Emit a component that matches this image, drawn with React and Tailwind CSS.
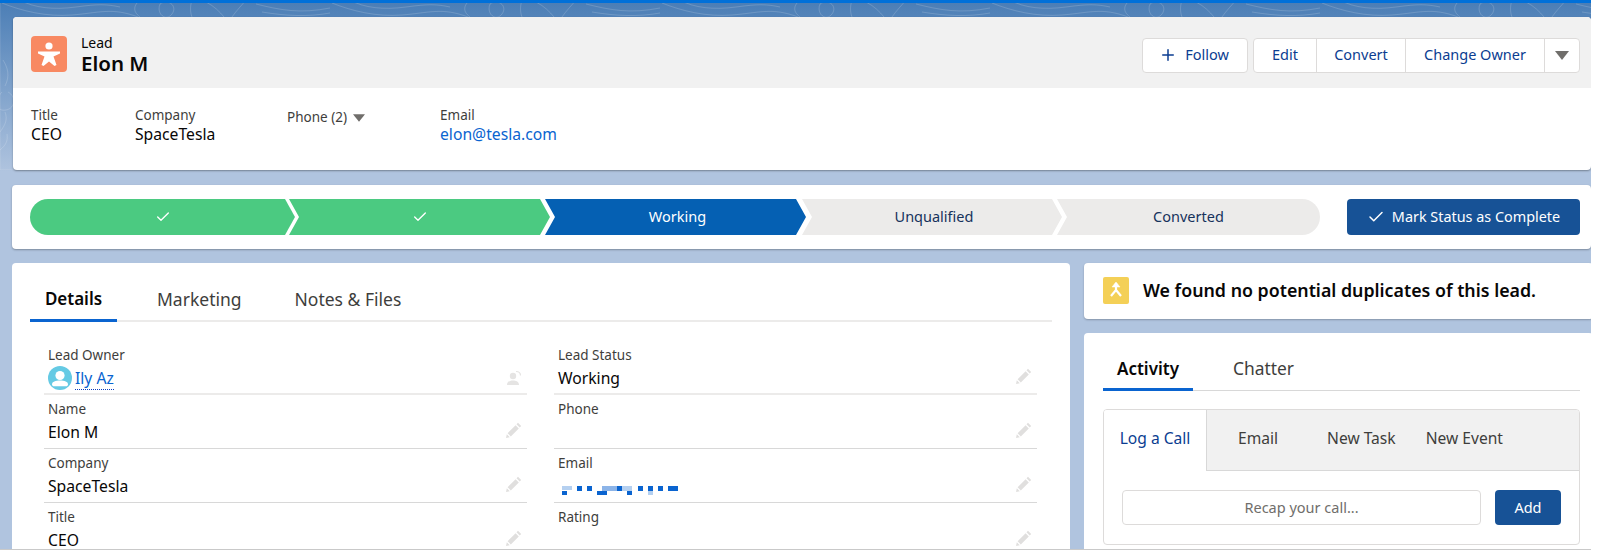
import { Check, Plus } from 'lucide-react';

const FONT = 'font-["Noto_Sans",sans-serif]';

const PATH_STEPS = [
  { label: null, cls: 'w-[265px] bg-[#4bca81] rounded-l-[18px] [clip-path:polygon(0_0,calc(100%-10px)_0,100%_50%,calc(100%-10px)_100%,0_100%)]' },
  { label: null, cls: 'w-[261px] -ml-[6px] bg-[#4bca81] [clip-path:polygon(0_0,calc(100%-10px)_0,100%_50%,calc(100%-10px)_100%,0_100%,10px_50%)]' },
  { label: 'Working', cls: 'w-[261px] -ml-[5px] pl-[4px] bg-[#0560b3] text-white [clip-path:polygon(0_0,calc(100%-10px)_0,100%_50%,calc(100%-10px)_100%,0_100%,10px_50%)]' },
  { label: 'Unqualified', cls: 'w-[260px] -ml-[4px] pl-[4px] bg-[#ecebea] text-[#16325c] [clip-path:polygon(0_0,calc(100%-10px)_0,100%_50%,calc(100%-10px)_100%,0_100%,10px_50%)]' },
  { label: 'Converted', cls: 'w-[263px] -ml-[5px] bg-[#ecebea] text-[#16325c] rounded-r-[18px] [clip-path:polygon(0_0,100%_0,100%_100%,0_100%,10px_50%)]' },
];

const LEFT_FIELDS = [
  { label: 'Lead Owner', owner: true },
  { label: 'Name', value: 'Elon M' },
  { label: 'Company', value: 'SpaceTesla' },
  { label: 'Title', value: 'CEO' },
];

const RIGHT_FIELDS = [
  { label: 'Lead Status', value: 'Working' },
  { label: 'Phone' },
  { label: 'Email', blurred: true },
  { label: 'Rating' },
];

// dark and light squares of the pixelated address
const BLUR_RECTS = [
  [0, 0, 10, 4, '#b5d0f0'], [0, 5, 5, 4, '#0a64d0'], [15, 0, 5, 5, '#0a64d0'], [25, 0, 5, 5, '#0a64d0'],
  [35, 5, 10, 4, '#0a64d0'], [40, 0, 15, 5, '#8cb4e8'], [55, 0, 5, 5, '#0a64d0'], [60, 0, 5, 5, '#b5d0f0'],
  [65, 0, 5, 5, '#b5d0f0'], [65, 5, 5, 4, '#0a64d0'], [76, 0, 5, 5, '#0a64d0'], [86, 0, 5, 5, '#0a64d0'],
  [86, 5, 5, 4, '#b5d0f0'], [96, 0, 5, 5, '#0a64d0'], [106, 0, 10, 5, '#0a64d0'],
];

function Topo() {
  return (
    <svg className="absolute left-0 top-0" width="1600" height="170" fill="none" stroke="#ffffff" strokeOpacity="0.16" strokeWidth="1">
      <defs>
        <pattern id="topo" width="330" height="170" patternUnits="userSpaceOnUse">
          <path d="M2 3c20 8 44 14 70 12s40-8 66 2M20 0c14 8 34 10 56 7s30-3 44 0M140 17c-8-6-6-12 0-17M160 4c8-6 18 2 12 10s-16 0-12-10M192 0c-2 6-2 12 0 17M206 2c8 4 14 10 18 15M232 17c4-6 10-12 14-17M256 4c24 6 44 10 74 4M262 12c24 4 46 5 68 1" />
          <path d="M2 92c-8 8-6 20 4 18s10-14 2-18M0 132c5-7 8-12 5-20M3 60c5 8 7 16 2 26M0 150c6-5 8-9 7-16" />
        </pattern>
      </defs>
      <rect width="1600" height="170" fill="url(#topo)" />
    </svg>
  );
}

function LeadIcon() {
  return (
    <div className="w-9 h-9 rounded-[4px] bg-[#f88962] flex items-center justify-center">
      <svg width="24" height="26" viewBox="0 0 24 26" fill="#fff">
        <circle cx="12" cy="5" r="3.6" />
        <path d="M1 10.5 L23 10.5 L23 12.5 L16.5 15.5 L19.5 24 L17.5 25 L12 20.5 L6.5 25 L4.5 24 L7.5 15.5 L1 12.5Z" />
      </svg>
    </div>
  );
}

function Caret({ className }) {
  return (
    <svg className={className} width="14" height="9" viewBox="0 0 14 9" fill="#706e6b">
      <path d="M0 0h14L7 9z" />
    </svg>
  );
}

function Pencil() {
  return (
    <svg width="16" height="16" viewBox="0 0 16 16" fill="#e0dfde">
      <path d="M12 0.8l3.2 3.2-1.5 1.5-3.2-3.2zM9.6 3.2l3.2 3.2-8 8-3.2-3.2zM0.8 12.2l3 3-3.8 0.8z" />
    </svg>
  );
}

function OwnerChange() {
  return (
    <svg width="16" height="16" viewBox="0 0 16 16" fill="#e5e4e3">
      <circle cx="7" cy="6" r="3.2" />
      <path d="M1 15c0-3.5 3-4.6 6-4.6s6 1.100 6 4.600z" />
      <path d="M10 1.500c2.500 0 4.500 1.500 4.500 4" fill="none" stroke="#e5e4e3" strokeWidth="1.200" />
    </svg>
  );
}

function Avatar() {
  return (
    <svg width="24" height="24" viewBox="0 0 24 24" className="shrink-0">
      <circle cx="12" cy="12" r="12" fill="#65cae4" />
      <circle cx="12" cy="9.500" r="4.600" fill="#fff" />
      <path d="M4 18.500c0-3 3.500-4 8-4s8 1 8 4c0 1-1 1.800-2 1.800H6c-1 0-2-.8-2-1.800z" fill="#fff" />
    </svg>
  );
}

function MergeIcon() {
  return (
    <div className="w-[26px] h-[27px] rounded-[2px] bg-[#f4d057] flex items-center justify-center">
      <svg width="14" height="18" viewBox="0 0 14 18" fill="none" stroke="#fff" strokeWidth="2.200">
        <path d="M7 2v7M7 9l-5 6M7 9l5 6" />
        <path d="M3 6l4-5 4 5z" fill="#fff" strokeWidth="0.500" />
      </svg>
    </div>
  );
}

function Field({ field, first }) {
  return (
    <div className={`h-[54px] pt-[5px] px-[4px] relative ${first ? 'border-b-2 border-[#ecebea]' : 'border-b border-[#d8d8d8]'}`}>
      <div className="text-[13.5px] leading-[18px] text-[#3e3e3c]">{field.label}</div>
      <div className="h-[24px] mt-[2px] flex items-center text-[15.7px] leading-[24px] text-[#080707]">
        {field.owner && (
          <span className="flex items-center gap-[3px]">
            <Avatar />
            <span className="text-[#0a64d0] border-b border-dotted border-[#0a3fc0] leading-[22px]">Ily Az</span>
          </span>
        )}
        {field.value}
        {field.blurred && (
          <svg width="116" height="10" className="mt-[10px] ml-[4px]">
            {BLUR_RECTS.map(([x, y, w, h, c], i) => <rect key={i} x={x} y={y} width={w} height={h} fill={c} />)}
          </svg>
        )}
      </div>
      <div className={`absolute right-[5px] ${field.owner ? 'top-[29px]' : 'top-[27px]'}`}>
        {field.owner ? <OwnerChange /> : <Pencil />}
      </div>
    </div>
  );
}

export default function App() {
  return (
    <div className={`w-[1600px] h-[557px] bg-white overflow-hidden ${FONT}`}>
      <div className="w-[1591px] h-[550px] relative overflow-hidden border-b border-[#c9c9c9] bg-[linear-gradient(180deg,#4a7db5_0,#b0c4df_172px)]">
        <Topo />
        <div className="h-[3px] bg-[#0070d9] relative" />

        <div className="relative pl-[12px] pt-[14px] flex flex-col">
          {/* Record header */}
          <section className="ml-px h-[153px] rounded-[4px] bg-white overflow-hidden shadow-[0_1px_2px_rgba(0,0,0,0.35)]">
            <div className="h-[71px] bg-[#f1f1f1] flex items-center justify-between pl-[18px] pr-[11px]">
              <div className="flex items-center gap-[14px] pt-[2px]">
                <LeadIcon />
                <div className="pt-[2px]">
                  <div className="text-[14px] leading-[17px] text-[#080707]">Lead</div>
                  <div className="text-[20.5px] leading-[24px] font-semibold text-[#080707]">Elon M</div>
                </div>
              </div>
              <div className="flex items-center gap-[5px] text-[14.5px] text-[#0b3d91] pt-[5px]">
                <button className="w-[106px] h-[35px] flex items-center justify-center gap-[8px] pr-[2px] bg-white border border-[#dddbda] rounded-[4px]">
                  <Plus size={18} strokeWidth={2} />Follow
                </button>
                <div className="h-[35px] flex bg-white border border-[#dddbda] rounded-[4px]">
                  <button className="w-[62px]">Edit</button>
                  <button className="w-[89px] border-l border-[#dddbda]">Convert</button>
                  <button className="w-[139px] border-l border-[#dddbda]">Change Owner</button>
                  <button className="w-[35px] border-l border-[#dddbda] flex items-center justify-center"><Caret /></button>
                </div>
              </div>
            </div>
            <div className="flex pl-[18px] pt-[18px] text-[15.7px] text-[#080707]">
              <div className="w-[104px]">
                <div className="text-[13.5px] leading-[18px] text-[#3e3e3c]">Title</div>
                <div className="leading-[20px]">CEO</div>
              </div>
              <div className="w-[152px]">
                <div className="text-[13.5px] leading-[18px] text-[#3e3e3c]">Company</div>
                <div className="leading-[20px]">SpaceTesla</div>
              </div>
              <div className="w-[153px] flex items-start gap-[6px] text-[13.5px] leading-[18px] text-[#3e3e3c] pt-[2px]">
                Phone (2)<Caret className="mt-[6px] w-[12px] h-[8px]" />
              </div>
              <div>
                <div className="text-[13.5px] leading-[18px] text-[#3e3e3c]">Email</div>
                <div className="leading-[20px] text-[#0a64d0]">elon@tesla.com</div>
              </div>
            </div>
          </section>

          {/* Status path */}
          <section className="mt-[15px] h-[64px] rounded-[4px] bg-white flex items-center justify-between pl-[18px] pr-[11px] shadow-[0_1px_2px_rgba(0,0,0,0.3)]">
            <div className="flex text-[14.5px]">
              {PATH_STEPS.map((step, i) => (
                <div key={i} className={`h-[36px] flex items-center justify-center ${step.cls}`}>
                  {step.label || <Check size={16} color="#fff" strokeWidth={2} />}
                </div>
              ))}
            </div>
            <button className="w-[233px] h-[36px] rounded-[4px] bg-[#175296] text-white text-[14.4px] flex items-center justify-center gap-[7px]">
              <Check size={18} strokeWidth={2} />Mark Status as Complete
            </button>
          </section>

          <div className="mt-[14px] flex gap-[14px] items-start">
            {/* Details */}
            <section className="w-[1058px] h-[300px] rounded-[4px] bg-white pl-[18px] pr-[18px] shrink-0">
              <div className="h-[59px] flex border-b-2 border-[#ecebea] text-[17.5px] text-[#3e3e3c]">
                <div className="w-[87px] h-[59px] border-b-[3px] border-[#0a64d0] flex items-center justify-center font-semibold text-[#080707] text-[17px] pt-[15px]">Details</div>
                <div className="ml-[40px] flex items-center pt-[15px]">Marketing</div>
                <div className="ml-[53px] flex items-center pt-[15px]">Notes &amp; Files</div>
              </div>
              <div className="mt-[19px] ml-[14px] grid grid-cols-[483px_483px] gap-x-[27px]">
                <div>{LEFT_FIELDS.map((f, i) => <Field key={f.label} field={f} first={i === 0} />)}</div>
                <div>{RIGHT_FIELDS.map((f, i) => <Field key={f.label} field={f} first={i === 0} />)}</div>
              </div>
            </section>

            <div className="flex-1 flex flex-col gap-[14px]">
              <section className="h-[56px] rounded-[4px] bg-white flex items-center gap-[14px] pl-[19px] pb-[2px] shadow-[0_1px_2px_rgba(0,0,0,0.25)]">
                <MergeIcon />
                <span className="text-[17.8px] font-semibold text-[#080707]">We found no potential duplicates of this lead.</span>
              </section>

              {/* Activity */}
              <section className="h-[300px] rounded-[4px] bg-white px-[19px] pr-[13px]">
                <div className="h-[58px] flex border-b border-[#d8d8d8] text-[17.4px] text-[#3e3e3c]">
                  <div className="w-[90px] h-[58px] border-b-[3px] border-[#0a64d0] flex items-center justify-center font-semibold text-[17px] text-[#080707] pt-[17px]">Activity</div>
                  <div className="ml-[40px] flex items-center pt-[14px]">Chatter</div>
                </div>
                <div className="mt-[18px] h-[136px] border border-[#dddbda] rounded-[4px] overflow-hidden">
                  <div className="h-[61px] flex bg-[#f1f1f1] border-b border-[#d8d8d8] text-[15.6px] text-[#3e3e3c]">
                    <div className="w-[103px] h-[61px] bg-white border-r border-[#d8d8d8] flex items-center justify-center text-[#0b3d91] pb-[3px]">Log a Call</div>
                    <div className="ml-[31px] flex items-center pb-[3px]">Email</div>
                    <div className="ml-[49px] flex items-center pb-[3px]">New Task</div>
                    <div className="ml-[30px] flex items-center pb-[3px]">New Event</div>
                  </div>
                  <div className="mt-[19px] px-[18px] flex gap-[14px]">
                    <div className="w-[359px] h-[35px] bg-white border border-[#dddbda] rounded-[4px] flex items-center justify-center text-[14.5px] text-[#706e6b]">Recap your call...</div>
                    <button className="w-[66px] h-[35px] rounded-[4px] bg-[#175296] text-white text-[14.5px]">Add</button>
                  </div>
                </div>
              </section>
            </div>
          </div>
        </div>
      </div>
    </div>
  );
}
